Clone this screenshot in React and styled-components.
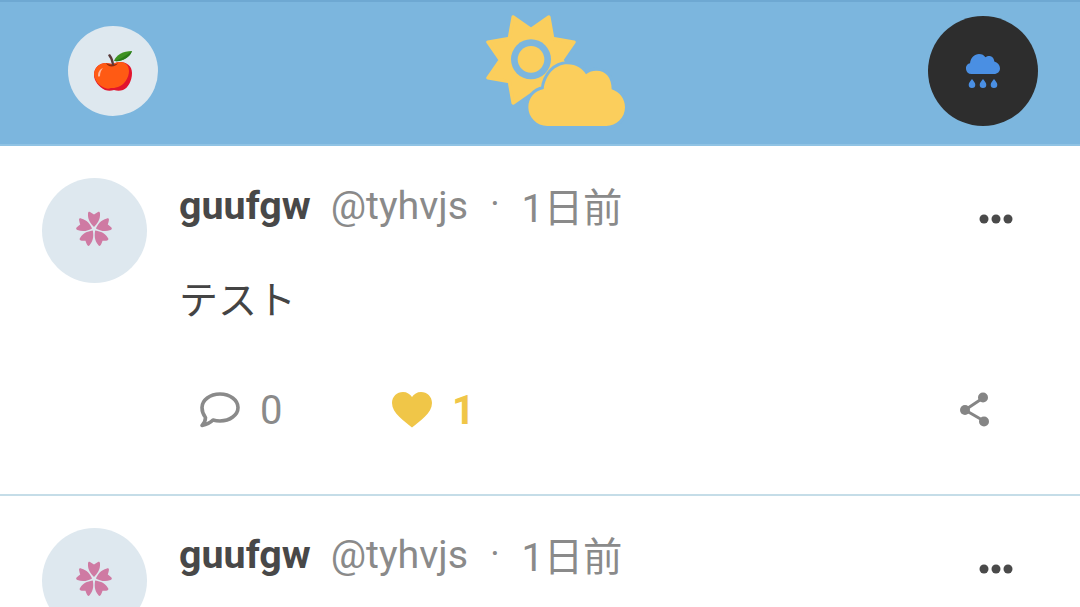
import React from "react";
import styled, { createGlobalStyle } from "styled-components";

const Global = createGlobalStyle`
  html, body { margin: 0; padding: 0; background: #fff; height: 607px; overflow: hidden; }
  body { font-family: Roboto, "Noto Sans CJK JP", sans-serif; }
`;
const Page = styled.div`width: 1080px; height: 607px; overflow: hidden;`;
const Header = styled.header`
  box-sizing: border-box; height: 146px; background: #7cb6de;
  border-top: 2px solid #6ea8d2; border-bottom: 2px solid #90c3e4;
  display: flex; align-items: center; justify-content: space-between;
  padding: 0 42px 4px 68px;
`;
const Round = styled.div`
  width: ${p => p.$size}px; height: ${p => p.$size}px; border-radius: 50%;
  background: ${p => p.$bg}; display: flex; align-items: center; justify-content: center; flex: none;
`;
const Logo = styled.svg`width: 170px; height: 150px; flex: none; margin: 8px 0 0 24px;`;
const Post = styled.article`
  box-sizing: border-box; height: 349.5px; border-bottom: 2px solid #c5dde8;
  display: flex; padding: 32px 66px 0 42px;
`;
const Main = styled.div`flex: 1; margin-left: 32px; min-width: 0;`;
const Meta = styled.div`display: flex; align-items: center; height: 58px; font-size: 39.4px; color: #8a8a8a; white-space: nowrap; margin-top: -2px;`;
const Name = styled.span`font-weight: 700; color: #484848; margin-right: 20px;`;
const Dot = styled.span`margin: 0 22px 0 22px; font-size: 36px; position: relative; top: -1px;`;
const Time = styled.span`position: relative; top: -1px;`;
const More = styled.svg`margin-left: auto; margin-top: 28px; flex: none;`;
const Body = styled.p`margin: 33px 0 0 0; font: 400 39px/60px "Noto Sans CJK JP", sans-serif; color: #444;`;
const Actions = styled.div`display: flex; align-items: center; height: 50px; margin-top: 58px; padding-left: 21px;`;
const Action = styled.div`
  display: flex; align-items: center; gap: 20px; width: 192px; font-size: 40px;
  color: ${p => p.$color}; font-weight: ${p => p.$bold ? 700 : 400};
`;
const Share = styled.svg`margin-left: auto; margin-right: 24px; flex: none;`;

const Apple = () => (
  <svg width="40" height="42" viewBox="0 0 40 42" style={{ marginTop: -1 }}>
    <path d="M1 25c0-8 6-12 12-12 3 0 4 1 6 1s4-2 8-2c7 0 12 4 12 11 0 8-4 15-9 17-3 1-6 1-9 0-3 1-6 1-9 0-6-3-11-9-11-15z" fill="#e2142d"/>
    <path d="M1 25c0-8 6-12 12-12 3 0 4 1 6 1s4-2 8-2c5 0 9 3 9 9 0 7-5 14-11 16-3 1-5 1-7 1-2 1-4 1-6 0-6-2-11-8-11-15z" fill="#ff5a14"/>
    <path d="M5 25c0-3 2-6 5-7-2 2-3 5-3 8-1 1-2 1-2-1z" fill="#ffb9a0"/>
    <path d="M13 13c3 2 9 2 12 0-2 4-10 5-12 0z" fill="#8a2a10"/>
    <path d="M19 15c-1-3-1-6-3-8l-1-2 2-1 2 3c1 2 2 5 2 8z" fill="#5a3a3a"/>
    <path d="M21 11c2-6 9-10 18-10-2 6-9 11-18 10z" fill="#3d9222"/>
    <path d="M21 11c5-1 12-5 18-10-2 6-9 11-18 10z" fill="#2a7a1c"/>
  </svg>
);
const Rain = () => (
  <svg width="34" height="34" viewBox="0 0 34 34" fill="#4a8fe3" style={{ marginTop: -1 }}>
    <path d="M5.500 20A5.500 5.500 0 0 1 4 9.200C4.800 3.500 8.500 0 13 0c3 0 5 1.200 6.500 3.300C20.500 2.300 22 2 23 2c3 0 5 2.200 5.300 5.500C31.500 8.500 34 11 34 14.500c0 3-2.500 5.500-6 5.500z"/>
    <path d="M6 25c1.600 2.200 3.300 3.800 3.300 5.700a3.300 3.300 0 0 1-6.600 0C2.700 28.800 4.400 27.200 6 25zM17 25c1.600 2.200 3.300 3.800 3.300 5.700a3.300 3.300 0 0 1-6.600 0c0-1.900 1.700-3.500 3.300-5.700zM28 25c1.600 2.200 3.300 3.800 3.300 5.700a3.300 3.300 0 0 1-6.600 0c0-1.900 1.700-3.500 3.300-5.700z"/>
  </svg>
);
const Sakura = () => (
  <svg width="40" height="40" viewBox="-20 -20 40 40" style={{ margin: "-3px 0 0 -2px" }}>
    {[0, 72, 144, 216, 288].map(a => (
      <path key={a} transform={`rotate(${a})`} fill="#cf7aa3"
        d="M0 -2C-3 -5 -6.500 -9 -6 -15.500C-6 -17 -5 -17.500 -4 -17C-2.500 -16.300 -1.500 -15.500 0 -14.500C1.500 -15.500 2.500 -16.300 4 -17C5 -17.500 6 -17 6 -15.500C6.500 -9 3 -5 0 -2z"/>
    ))}
  </svg>
);
const sunPts = (() => {
  const pts = [];
  for (let i = 0; i < 16; i++) {
    const r = i % 2 === 0 ? 140 : 92;
    const t = ((i * 22.5 + 22.5) * Math.PI) / 180;
    pts.push(`${(183 + r * Math.sin(t)).toFixed(1)},${(180 - r * Math.cos(t)).toFixed(1)}`);
  }
  return pts.join(" ");
})();
const Weather = () => (
  <Logo viewBox="0 0 510 450">
    <polygon points={sunPts} fill="#fbce5c" stroke="#fbce5c" strokeWidth="10" strokeLinejoin="round"/>
    <circle cx="183" cy="178" r="60" fill="#7cb6de"/>
    <circle cx="183" cy="178" r="40" fill="#fbce5c"/>
    <path d="M232 378c-32 0-57-26-57-56 0-28 19-50 46-55 5-42 34-74 71-74 28 0 46 14 56 30 9-8 20-11 31-11 30 0 46 22 46 56 24 8 40 28 40 54 0 32-26 56-56 56z"
      fill="#fbce5c" stroke="#7cb6de" strokeWidth="18" paintOrder="stroke"/>
  </Logo>
);
const MoreIcon = () => (
  <More width="36" height="12" viewBox="0 0 36 12" fill="#4a4a4a">
    <circle cx="6" cy="6" r="4.500"/><circle cx="18" cy="6" r="4.500"/><circle cx="30" cy="6" r="4.500"/>
  </More>
);
const Bubble = () => (
  <svg width="40" height="36" viewBox="0 0 40 36" fill="none" stroke="#8a8a8a" strokeWidth="3.600" strokeLinejoin="round">
    <path d="M20 2c10 0 18 6 18 13.500S30 29 20 29c-2.500 0-5-.4-7-1-2 2-6 4.500-11 5.500 2-2 3.500-5 3.500-8C3.500 23 2 19.500 2 15.500 2 8 10 2 20 2z"/>
  </svg>
);
const Heart = () => (
  <svg width="40" height="36" viewBox="0 0 40 36" fill="#f0c648">
    <path d="M20 35.500C12 29 0 21 0 11 0 4.500 5 0 11 0c4 0 7 2 9 5 2-3 5-5 9-5 6 0 11 4.500 11 11 0 10-12 18-20 24.500z"/>
  </svg>
);
const ShareIcon = () => (
  <Share width="32" height="36" viewBox="0 0 32 36" fill="#858585" stroke="#858585">
    <path d="M7 18L25 6M7 18l19 11" strokeWidth="3" fill="none"/>
    <circle cx="7" cy="18" r="5" stroke="none"/><circle cx="25" cy="5.500" r="5" stroke="none"/><circle cx="26" cy="29.500" r="5" stroke="none"/>
  </Share>
);

const PostCard = ({ preview }) => (
  <Post>
    <Round $size={105} $bg="#dee8ef"><Sakura /></Round>
    <Main>
      <Meta>
        <Name>guufgw</Name>@tyhvjs<Dot>·</Dot><Time>1日前</Time><MoreIcon />
      </Meta>
      {!preview && (
        <>
          <Body>テスト</Body>
          <Actions>
            <Action $color="#8a8a8a"><Bubble />0</Action>
            <Action $color="#f0c648" $bold><Heart />1</Action>
            <ShareIcon />
          </Actions>
        </>
      )}
    </Main>
  </Post>
);

export default function App() {
  return (
    <Page>
      <Global />
      <Header>
        <Round $size={90} $bg="#dee8ef"><Apple /></Round>
        <Weather />
        <Round $size={110} $bg="#2d2d2d"><Rain /></Round>
      </Header>
      <PostCard />
      <PostCard preview />
    </Page>
  );
}
